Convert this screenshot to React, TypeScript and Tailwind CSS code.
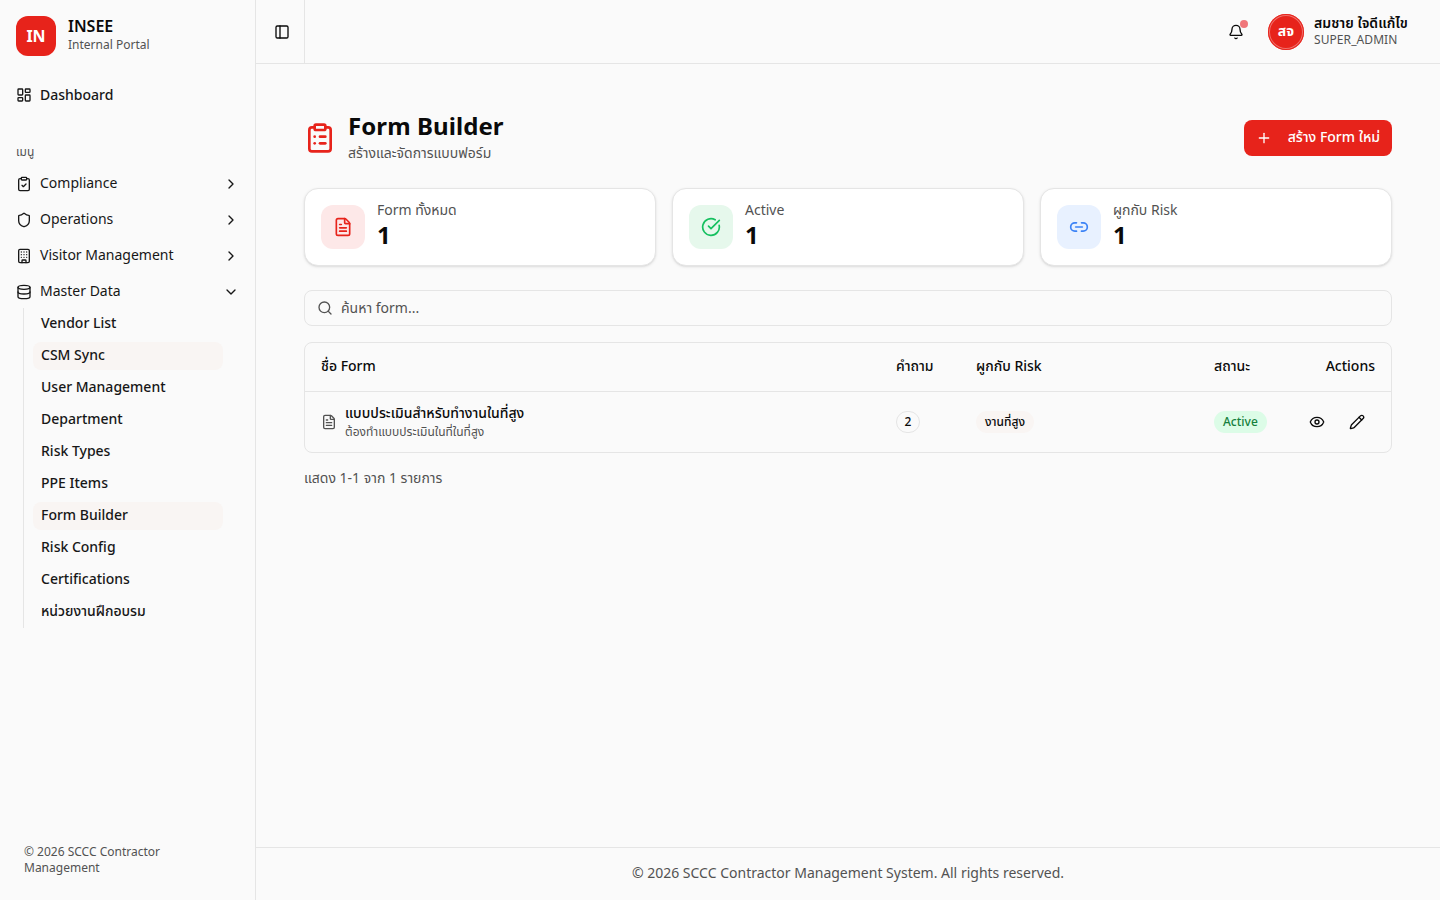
import { Bell, Building, ChevronDown, ChevronRight, CircleCheckBig, ClipboardCheck, ClipboardList, Database, Eye, FileText, LayoutDashboard, Link2, PanelLeft, Pencil, Plus, Search, Shield } from "lucide-react";
import type { ReactNode } from "react";

const font = { fontFamily: '"Noto Sans", "Noto Sans Thai", "Noto Sans CJK SC", sans-serif' };

function MenuItem({ icon, label, open }: { icon: ReactNode; label: string; open?: boolean }) {
  return (
    <div className="flex h-8 items-center gap-2 px-2 text-sm text-[#171717]">
      {icon}
      <span className="flex-1 pb-[2px]">{label}</span>
      {open ? <ChevronDown className="size-4" /> : <ChevronRight className="size-4" />}
    </div>
  );
}

function SubItem({ label, active }: { label: string; active?: boolean }) {
  return (
    <div className={`flex h-7 items-center rounded-lg px-2 pb-[2px] text-sm font-medium text-[#171717] ${active ? "bg-[#f9f5f3]" : ""}`}>
      {label}
    </div>
  );
}

function Stat({ icon, label, bg }: { icon: ReactNode; label: string; bg: string }) {
  return (
    <div className="flex items-center gap-3 rounded-[14px] border border-[#e5e5e5] bg-white p-4 shadow">
      <div className={`flex size-11 items-center justify-center rounded-xl ${bg}`}>{icon}</div>
      <div className="-mt-[5px] h-11 self-start">
        <div className="text-sm leading-5 text-[#525252]">{label}</div>
        <div className="-mt-[1px] text-2xl leading-8 font-bold text-[#0a0a0a]">1</div>
      </div>
    </div>
  );
}

export default function App() {
  const subs = ["Vendor List", "CSM Sync", "User Management", "Department", "Risk Types", "PPE Items", "Form Builder", "Risk Config", "Certifications", "หน่วยงานฝึกอบรม"];
  return (
    <div style={font} className="flex h-screen w-full overflow-hidden bg-[#fafafa] text-[#0a0a0a]">
      <aside className="flex w-64 shrink-0 flex-col border-r border-[#e5e5e5]">
        <div className="flex h-[72px] items-center gap-3 px-4">
          <div className="flex size-10 items-center justify-center rounded-xl bg-[#e7231b] font-bold text-white">IN</div>
          <div className="flex flex-col gap-[3px] pb-[1px]">
            <div className="text-base leading-4 font-semibold">INSEE</div>
            <div className="text-xs leading-4 text-[#525252]">Internal Portal</div>
          </div>
        </div>
        <div className="px-2 pt-[7px]">
          <div className="flex h-8 items-center gap-2 px-2 text-sm font-medium text-[#171717]">
            <LayoutDashboard className="size-4" />
            Dashboard
          </div>
        </div>
        <div className="px-2 pt-[25px]">
          <div className="flex h-8 items-center px-2 text-xs text-[#525252]">เมนู</div>
          <div className="flex flex-col gap-1">
            <MenuItem icon={<ClipboardCheck className="size-4" />} label="Compliance" />
            <MenuItem icon={<Shield className="size-4" />} label="Operations" />
            <MenuItem icon={<Building className="size-4" />} label="Visitor Management" />
            <MenuItem icon={<Database className="size-4" />} label="Master Data" open />
          </div>
          <div className="ml-[15px] mr-6 flex flex-col gap-1 border-l border-[#e5e5e5] pl-[9px] py-[2px]">
            {subs.map((s) => (
              <SubItem key={s} label={s} active={s === "CSM Sync" || s === "Form Builder"} />
            ))}
          </div>
        </div>
        <div className="mt-auto px-6 pb-6 text-xs leading-4 text-[#525252]">
          <div className="w-[170px]">© 2026 SCCC Contractor Management</div>
        </div>
      </aside>

      <div className="flex min-w-0 flex-1 flex-col">
        <header className="flex h-16 shrink-0 items-center border-b border-[#e5e5e5]">
          <div className="flex h-full w-[49px] items-center justify-center border-r border-[#e5e5e5] pl-[4px]">
            <PanelLeft className="size-4" />
          </div>
          <div className="flex flex-1 items-center justify-end gap-4 pr-8">
            <div className="relative mr-[-2px] flex size-9 items-center justify-center">
              <Bell className="size-4" />
              <span className="absolute top-[6px] right-[6px] size-2 rounded-full bg-[#f0767a]" />
            </div>
            <div className="flex items-center gap-[10px]">
              <div className="flex size-9 items-center justify-center rounded-full bg-[#e7231b] pb-[2px] text-sm font-bold text-white shadow-[inset_0_0_0_1px_#e7231b,inset_0_0_0_2px_rgba(255,255,255,0.35)]">สจ</div>
              <div className="w-[94px] pb-[2px]">
                <div className="text-sm leading-[18px] font-semibold whitespace-nowrap">สมชาย ใจดีแก้ไข</div>
                <div className="text-xs leading-4 tracking-[0.08px] text-[#525252]">SUPER_ADMIN</div>
              </div>
            </div>
          </div>
        </header>

        <main className="flex flex-1 flex-col px-12 pt-12">
          <div className="flex items-center justify-between">
            <div className="flex items-center gap-3">
              <ClipboardList className="size-8 text-[#e7231b]" />
              <div className="h-[52px]">
                <h1 className="-mt-[2px] text-2xl leading-8 font-bold tracking-[0.08px]">Form Builder</h1>
                <p className="mt-[1px] text-sm leading-5 text-[#525252]">สร้างและจัดการแบบฟอร์ม</p>
              </div>
            </div>
            <button className="flex h-9 items-center gap-4 rounded-lg bg-[#e7231b] pr-3 pl-3 text-sm font-medium text-white">
              <Plus className="size-4" />
              <span className="pb-[2px]">สร้าง Form ใหม่</span>
            </button>
          </div>

          <div className="mt-6 grid grid-cols-3 gap-4">
            <Stat bg="bg-[#fde8e8]" label="Form ทั้งหมด" icon={<FileText className="size-5 text-[#e7231b]" />} />
            <Stat bg="bg-[#e6f8ec]" label="Active" icon={<CircleCheckBig className="size-5 text-[#16c060]" />} />
            <Stat bg="bg-[#e8f1ff]" label="ผูกกับ Risk" icon={<Link2 className="size-5 text-[#3b82f6]" />} />
          </div>

          <div className="mt-6 flex h-9 items-center gap-2 rounded-lg border border-[#e5e5e5] px-3 text-sm text-[#525252]">
            <Search className="size-4" />
            ค้นหา form...
          </div>

          <div className="mt-4 overflow-hidden rounded-lg border border-[#e5e5e5]">
            <table className="w-full table-fixed text-sm">
              <colgroup>
                <col className="w-[575px]" />
                <col className="w-20" />
                <col className="w-[238px]" />
                <col />
              </colgroup>
              <thead>
                <tr className="h-12 border-b border-[#e5e5e5] text-left">
                  <th className="px-4 pb-[2px] font-medium">ชื่อ Form</th>
                  <th className="px-4 pb-[2px] font-medium">คำถาม</th>
                  <th className="px-4 pb-[2px] font-medium">ผูกกับ Risk</th>
                  <th className="px-4 pb-[2px] font-medium">
                    <div className="flex justify-between">
                      <span>สถานะ</span>
                      <span>Actions</span>
                    </div>
                  </th>
                </tr>
              </thead>
              <tbody>
                <tr className="h-[61px]">
                  <td className="px-4">
                    <div className="flex items-center gap-2">
                      <FileText className="size-4 text-[#525252]" />
                      <div className="h-9">
                        <div className="-mt-[1px] leading-5 font-medium">แบบประเมินสำหรับทำงานในที่สูง</div>
                        <div className="mt-[1px] text-xs leading-4 text-[#525252]">ต้องทำแบบประเมินในที่ในที่สูง</div>
                      </div>
                    </div>
                  </td>
                  <td className="px-4">
                    <span className="flex h-[22px] w-6 items-center justify-center rounded-full border border-[#e5e5e5] text-xs font-medium">2</span>
                  </td>
                  <td className="px-4">
                    <span className="inline-flex h-[22px] items-center rounded-full bg-[#f9f5f3] px-[9px] text-xs font-medium">งานที่สูง</span>
                  </td>
                  <td className="px-4">
                    <div className="flex items-center justify-between">
                      <span className="inline-flex h-[22px] items-center rounded-full bg-[#dcfce7] px-[9px] text-xs font-medium text-[#15803d]">Active</span>
                      <div className="flex gap-1">
                        <span className="flex size-9 items-center justify-center"><Eye className="size-4" /></span>
                        <span className="flex size-9 items-center justify-center"><Pencil className="size-4" /></span>
                      </div>
                    </div>
                  </td>
                </tr>
              </tbody>
            </table>
          </div>

          <p className="mt-[15px] text-sm leading-5 text-[#525252]">แสดง 1-1 จาก 1 รายการ</p>
        </main>

        <footer className="flex h-[53px] shrink-0 items-center justify-center border-t border-[#e5e5e5] pb-[2px] text-sm text-[#525252]">
          © 2026 SCCC Contractor Management System. All rights reserved.
        </footer>
      </div>
    </div>
  );
}
